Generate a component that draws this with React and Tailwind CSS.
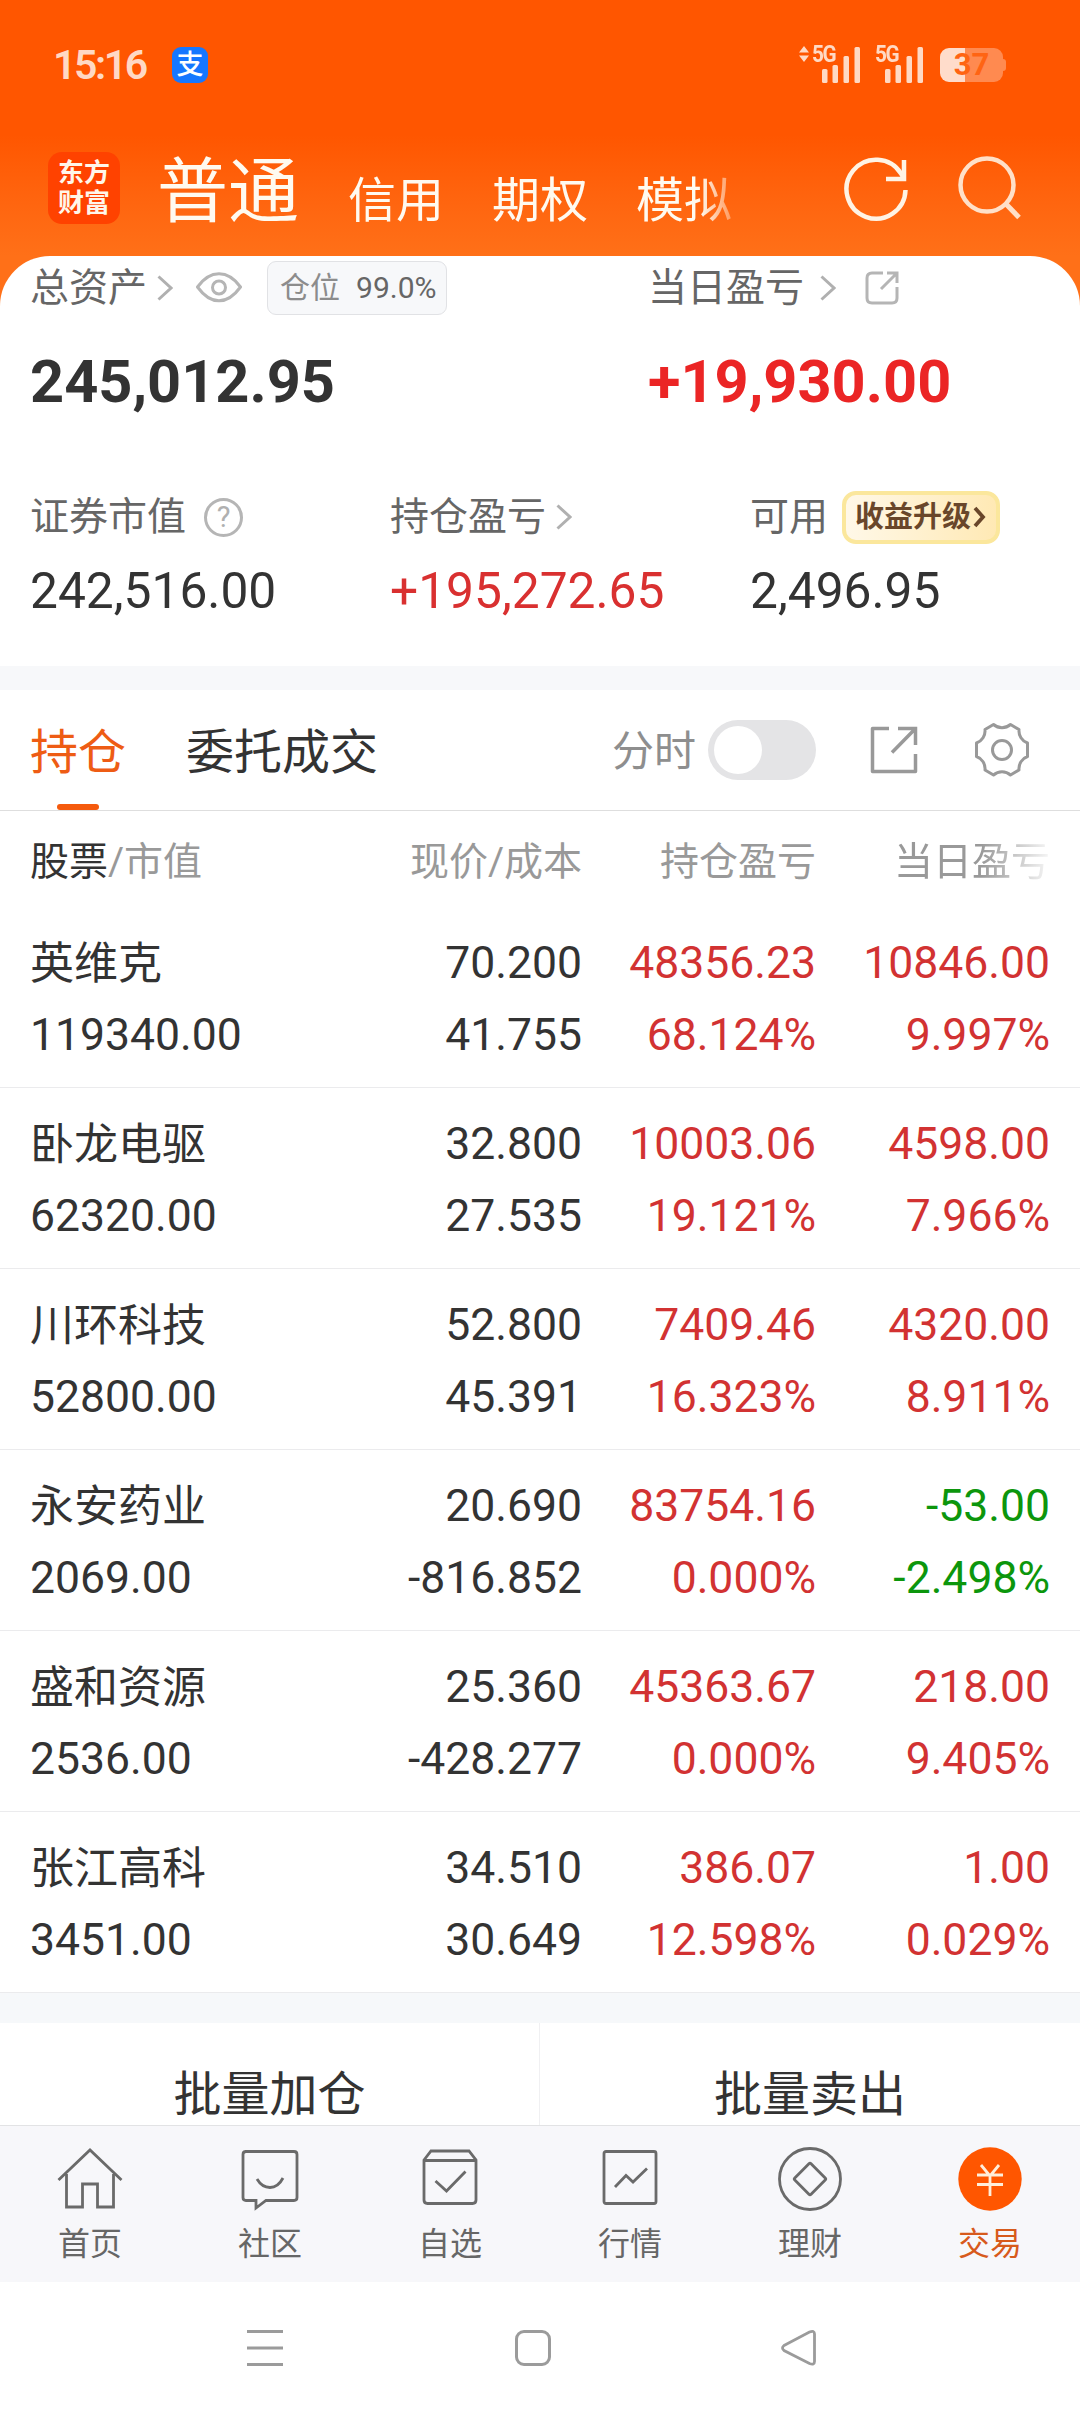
const holdings = [
  { name: "英维克", value: "119340.00", price: "70.200", cost: "41.755", profit: "48356.23", rate: "68.124%", day: "10846.00", dayRate: "9.997%" },
  { name: "卧龙电驱", value: "62320.00", price: "32.800", cost: "27.535", profit: "10003.06", rate: "19.121%", day: "4598.00", dayRate: "7.966%" },
  { name: "川环科技", value: "52800.00", price: "52.800", cost: "45.391", profit: "7409.46", rate: "16.323%", day: "4320.00", dayRate: "8.911%" },
  { name: "永安药业", value: "2069.00", price: "20.690", cost: "-816.852", profit: "83754.16", rate: "0.000%", day: "-53.00", dayRate: "-2.498%" },
  { name: "盛和资源", value: "2536.00", price: "25.360", cost: "-428.277", profit: "45363.67", rate: "0.000%", day: "218.00", dayRate: "9.405%" },
  { name: "张江高科", value: "3451.00", price: "34.510", cost: "30.649", profit: "386.07", rate: "12.598%", day: "1.00", dayRate: "0.029%" },
];

const Chevron = ({ className = "" }) => (
  <svg className={className} width="16" height="26" viewBox="0 0 16 26" fill="none" stroke="#b0b0b0" strokeWidth="3">
    <path d="M1.5 1.5 14 13 1.5 24.5" />
  </svg>
);

const Signal = () => (
  <div className="flex h-[38px] w-[49px] relative">
    <span className="absolute left-0 top-0 origin-left scale-x-90 text-[23px] leading-[18px] font-bold tracking-[-1.5px]">5G</span>
    <svg width="49" height="38" viewBox="0 0 49 38" fill="#ffd9c4">
      <rect x="10" y="23" width="5.5" height="14" rx="1.5" />
      <rect x="20.5" y="19" width="5.5" height="18" rx="1.5" />
      <rect x="31.5" y="10" width="5.5" height="27" rx="1.5" />
      <rect x="42.5" y="1" width="5.5" height="36" rx="1.5" />
    </svg>
  </div>
);

const StatusBar = () => (
  <div className="flex h-[105px] items-center pt-[24px] pl-[53px] pr-[74px] text-[#ffd9c4]">
    <span className="w-[119px] text-[41px] leading-[40px] font-semibold tracking-[-2.4px]">15:16</span>
    <span className="flex h-[36px] w-[36px] items-center justify-center rounded-[9px] bg-[#1677ff] text-[27px] leading-[36px] font-medium text-white">
      支
    </span>
    <div className="ml-auto flex items-center">
      <svg className="mr-[3px] mb-[21px]" width="10" height="16" viewBox="0 0 10 16" fill="#ffd9c4">
        <path d="M5 0 10 6.5H0ZM5 16 0 9.500H10Z" />
      </svg>
      <Signal />
      <div className="w-[14px]" />
      <Signal />
      <div className="ml-[16px] flex items-center">
        <div className="flex h-[34px] w-[63px] items-center justify-center rounded-[9px] bg-linear-to-r from-[#ffdccb] from-40% to-[#ff8a50] to-40% text-[31px] leading-[34px] font-bold text-[#ff6413]">
          37
        </div>
        <div className="h-[12px] w-[3px] rounded-r-[3px] bg-[#ff8a50]" />
      </div>
    </div>
  </div>
);

const Header = () => (
  <div className="flex h-[151px] items-start pl-[48px] text-[#fffaf0]">
    <div className="mt-[47px] flex h-[72px] w-[72px] flex-col items-center justify-center rounded-[14px] bg-[#ff4200] text-[26px] leading-[30px] font-bold text-[#fff6ea]">
      <span>东方</span>
      <span>财富</span>
    </div>
    <span className="mt-[47px] ml-[37px] w-[142px] text-[71px] leading-[80px]">普通</span>
    <div className="mt-[67px] ml-[49px] flex w-[400px] gap-[48px] overflow-hidden text-[48px] leading-[58px] whitespace-nowrap mask-r-from-[352px] mask-r-to-[400px]">
      <span>信用</span>
      <span>期权</span>
      <span>模拟</span>
    </div>
    <svg className="mt-[50px] ml-[96px]" width="66" height="68" viewBox="0 0 66 68" fill="none" stroke="#fff3e4" strokeWidth="4.500">
      <path d="M61.500 35A29.500 29.500 0 1 1 57 18.500L60 24" />
      <path d="M60 5V24H42" strokeWidth="4.500" />
    </svg>
    <svg className="mt-[48px] ml-[47px]" width="66" height="68" viewBox="0 0 66 68" fill="none" stroke="#ffe0c8" strokeWidth="4.500">
      <circle cx="30" cy="32" r="26.500" />
      <path d="M49 51 62 64.500" strokeWidth="5" />
    </svg>
  </div>
);

const Summary = () => (
  <div className="h-[410px] rounded-t-[50px] bg-white pt-[5px] pl-[30px]">
    <div className="flex h-[54px] items-center text-[39px] leading-[54px] text-[#666]">
      <div className="flex w-[618px] items-center">
        <span>总资产</span>
        <Chevron className="ml-[10px]" />
        <svg className="ml-[23px]" width="46" height="32" viewBox="0 0 46 32" fill="none" stroke="#b5b5b5" strokeWidth="3">
          <path d="M1.500 15C8 6 15 1.800 23 1.800S38 6 44.500 15C38 24 31 28.800 23 28.800S8 24 1.500 15Z" />
          <circle cx="23" cy="15.500" r="6.500" />
        </svg>
        <span className="ml-[25px] flex h-[54px] w-[180px] items-center rounded-[9px] border border-[#e1e2e5] bg-[#f7f8fa] pl-[12px] text-[30px]">
          <span className="text-[#8c8c8c]">仓位</span>
          <span className="ml-[16px]">99.0%</span>
        </span>
      </div>
      <span>当日盈亏</span>
      <Chevron className="ml-[16px]" />
      <svg className="ml-[29px]" width="34" height="34" viewBox="0 0 34 34" fill="none" stroke="#b5b5b5" strokeWidth="3">
        <path d="M18 2H7Q2 2 2 7V27Q2 32 7 32H27Q32 32 32 27V16" />
        <path d="M22 2H32V12M32 2 16 18" />
      </svg>
    </div>
    <div className="mt-[31px] flex h-[73px] items-center pt-[1px] text-[59.500px] font-bold">
      <span className="w-[618px] text-[#333]">245,012.95</span>
      <span className="text-[#eb2525]">+19,930.00</span>
    </div>
    <div className="mt-[71px] grid h-[54px] grid-cols-[360px_360px_1fr] items-center text-[39px] leading-[54px] text-[#666]">
      <div className="flex items-center">
        <span>证券市值</span>
        <span className="ml-[18px] flex h-[39px] w-[39px] items-center justify-center rounded-full border-3 border-[#b5b5b5] text-[29px] leading-[33px] text-[#b0b0b0]">
          ?
        </span>
      </div>
      <div className="flex items-center">
        <span>持仓盈亏</span>
        <Chevron className="ml-[10px]" />
      </div>
      <div className="flex items-center">
        <span>可用</span>
        <span className="ml-[14px] flex h-[53px] w-[158px] items-center rounded-[14px] border-4 border-[#fbe79c] bg-linear-to-r from-[#fff8e8] to-[#ffe9b4] pl-[9px] text-[29px] leading-[46px] font-bold text-[#69462a]">
          收益升级
          <svg className="ml-[2px]" width="13" height="22" viewBox="0 0 13 22" fill="none" stroke="#69462a" strokeWidth="3.800">
            <path d="M2 2 10 11 2 20" />
          </svg>
        </span>
      </div>
    </div>
    <div className="mt-[16px] grid h-[60px] grid-cols-[360px_360px_1fr] items-center pt-[1px] text-[49.700px] leading-[60px] text-[#333]">
      <span>242,516.00</span>
      <span className="text-[#d93030]">+195,272.65</span>
      <span>2,496.95</span>
    </div>
  </div>
);

const Tabs = () => (
  <div className="flex h-[121px] border-b border-[#dedede] pl-[30px] text-[48px]">
    <div className="flex h-[120px] flex-col items-center justify-between text-[#ee5c14]">
      <span className="pt-[33px] leading-[60px]">持仓</span>
      <div className="h-[6px] w-[42px] rounded-full bg-[#f55a0d]" />
    </div>
    <span className="ml-[60px] pt-[33px] leading-[60px] text-[#333]">委托成交</span>
    <div className="ml-auto flex h-[120px] items-center pr-[50px]">
      <span className="pt-[4px] text-[42px] leading-[60px] text-[#8e8e8e]">分时</span>
      <div className="ml-[12px] h-[60px] w-[108px] rounded-full bg-[#e4e4e6] p-[6px]">
        <div className="h-[48px] w-[48px] rounded-full bg-white" />
      </div>
      <svg className="ml-[54px]" width="48" height="48" viewBox="0 0 48 48" fill="none" stroke="#999" strokeWidth="3.500" strokeLinejoin="round">
        <path d="M19 2.500H2.500V45.500H45.500V28" />
        <path d="M28 2.500H45.500V19M45.500 2.500 22 26.500" strokeLinejoin="miter" />
      </svg>
      <svg className="ml-[56px]" width="56" height="56" viewBox="0 0 56 56" fill="none" stroke="#999" strokeWidth="3" strokeLinejoin="round">
        <path d="M19.500 2.500A13 13 0 0 0 36.500 2.500L45 7.500A13 13 0 0 0 53.500 21V34.500A13 13 0 0 0 45 48L36.500 53A13 13 0 0 0 19.500 53L11 48A13 13 0 0 0 2.500 34.500V21A13 13 0 0 0 11 7.500Z" />
        <circle cx="28" cy="28" r="9.500" />
      </svg>
    </div>
  </div>
);

const Holding = ({ item }) => {
  const dayColor = item.day.startsWith("-") ? "text-[#0c960c]" : "text-[#d23232]";
  return (
    <div className="grid h-[181px] grid-cols-[280px_272px_234px_234px] content-start border-b border-[#ebebed] pt-[20px] pl-[30px] text-right text-[44.500px] leading-[72px] text-[#333]">
      <span className="pt-[2px] text-left text-[44px] leading-[70px]">{item.name}</span>
      <span>{item.price}</span>
      <span className="text-[#d23232]">{item.profit}</span>
      <span className={dayColor}>{item.day}</span>
      <span className="text-left">{item.value}</span>
      <span>{item.cost}</span>
      <span className="text-[#d23232]">{item.rate}</span>
      <span className={dayColor}>{item.dayRate}</span>
    </div>
  );
};

const navItems = [
  {
    label: "首页",
    icon: (
      <>
        <path d="M1.500 33 33 3 64.500 33" />
        <path d="M9.500 27V60H25.500V37H40.500V60H56.500V27" />
      </>
    ),
  },
  {
    label: "社区",
    icon: (
      <>
        <path d="M8 4.500H57Q60 4.500 60 7.500V50.500Q60 53.500 57 53.500H29L19 61V53.500H9Q6 53.500 6 50.500V7.500Q6 4.500 9 4.500" />
        <path d="M20 32Q25 40.500 33 40.500T46 31" />
      </>
    ),
  },
  {
    label: "自选",
    icon: (
      <>
        <path d="M7 13 14 4H52L59 13V53Q59 56.500 55.500 56.500H10.500Q7 56.500 7 53ZM7 13.500H59" />
        <path d="M18.500 34 29.500 44 48.500 24.500" />
      </>
    ),
  },
  {
    label: "行情",
    icon: (
      <>
        <rect x="7" y="4.500" width="52" height="52" rx="2" />
        <path d="M18 40 29 28.500 36 35 50 21.500" />
      </>
    ),
  },
  {
    label: "理财",
    icon: (
      <>
        <circle cx="33" cy="32" r="30.500" />
        <rect x="21.500" y="20.500" width="23" height="23" rx="1.500" transform="rotate(45 33 32)" />
      </>
    ),
  },
  {
    label: "交易",
    active: true,
    icon: (
      <>
        <circle cx="33" cy="32" r="31.700" fill="#ff5600" stroke="none" />
        <path d="M24 18 33 29 42 18M33 28V49M20 28H46M20 37.500H46" stroke="#ffeeda" />
      </>
    ),
  },
];

const BottomNav = () => (
  <div className="grid h-[157px] grid-cols-6 border-t border-[#e2e3e5] bg-[#f7f7fa]">
    {navItems.map((item) => (
      <div key={item.label} className="flex flex-col items-center pt-[21px]">
        <svg width="66" height="66" viewBox="0 0 66 66" fill="none" stroke="#6a6a6a" strokeWidth="2.800">
          {item.icon}
        </svg>
        <span className={`mt-[9px] text-[32px] leading-[44px] ${item.active ? "text-[#d75a1c]" : "text-[#666]"}`}>
          {item.label}
        </span>
      </div>
    ))}
  </div>
);

const SystemNav = () => (
  <div className="flex h-[132px] items-center bg-white pl-[247px]">
    <svg width="36" height="38" viewBox="0 0 36 38" stroke="#9b9b9b" strokeWidth="3">
      <path d="M0 2.500H36M0 19H36M0 35.500H36" />
    </svg>
    <div className="ml-[232px] h-[36px] w-[36px] rounded-[9px] border-3 border-[#9b9b9b]" />
    <svg className="ml-[230px]" width="36" height="38" viewBox="0 0 36 38" fill="none" stroke="#9b9b9b" strokeWidth="2.800">
      <path d="M3 16.500 28.500 3Q33.500 1 33.500 5V32.500Q33.500 36.500 28.500 34.500L3 21.500Q0 19 3 16.500Z" />
    </svg>
  </div>
);

const App = () => {
  return (
    <div className="w-[1080px] h-[2414px] overflow-hidden bg-white font-['Roboto','Noto_Sans_CJK_SC',sans-serif]">
      <div className="bg-linear-to-b from-[#ff5600] from-[135px] to-[#ff7018] to-[256px]">
        <StatusBar />
        <Header />
        <Summary />
      </div>
      <div className="h-[24px] bg-[#f7f8fa]" />
      <Tabs />
      <div className="grid h-[96px] grid-cols-[280px_272px_234px_234px] pt-[3px] pl-[30px] text-right text-[39px] leading-[96px] text-[#999]">
        <span className="text-left">
          <span className="text-[#333]">股票</span>/市值
        </span>
        <span>现价/成本</span>
        <span>持仓盈亏</span>
        <span className="mask-r-from-[165px] mask-r-to-[240px]">当日盈亏</span>
      </div>
      {holdings.map((item) => (
        <Holding key={item.name} item={item} />
      ))}
      <div className="h-[30px] bg-[#f6f8fa]" />
      <div className="grid h-[102px] grid-cols-2 text-center text-[48px] leading-[143px] text-[#333]">
        <span className="h-[102px] border-r border-[#f0f0f2]">批量加仓</span>
        <span>批量卖出</span>
      </div>
      <BottomNav />
      <SystemNav />
    </div>
  );
};

export default App;
